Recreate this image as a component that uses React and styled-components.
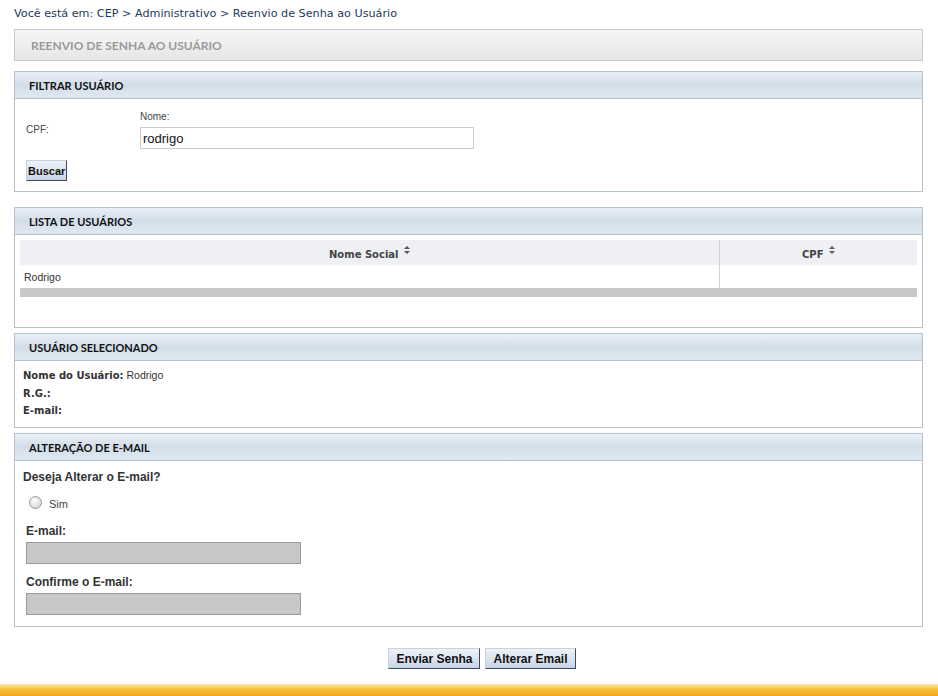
import styled, { createGlobalStyle } from 'styled-components';

const GlobalStyle = createGlobalStyle`
    html, body {
        margin: 0;
        padding: 0;
        background: #ffffff;
    }
    body {
        font-family: "Liberation Sans", Arial, sans-serif;
        color: #333;
    }
`;

const usuarios = [{ nome: 'Rodrigo', cpf: '' }];

function SortIcon() {
    return (
        <svg width="6" height="8" viewBox="0 0 6 8">
            <path d="M3 0 L6 3 L0 3 Z" fill="#555" />
            <path d="M0 5 L6 5 L3 8 Z" fill="#555" />
        </svg>
    );
}

export default function App() {
    return (
        <>
            <GlobalStyle />
            <Page>
                <Breadcrumb>Você está em: CEP &gt; Administrativo &gt; Reenvio de Senha ao Usuário</Breadcrumb>
                <TitleBar>REENVIO DE SENHA AO USUÁRIO</TitleBar>

                <Panel $gap="10px">
                    <PanelHeader>FILTRAR USUÁRIO</PanelHeader>
                    <FilterBody>
                        <FilterRow>
                            <CpfLabel>CPF:</CpfLabel>
                            <Field>
                                <SmallLabel>Nome:</SmallLabel>
                                <TextInput defaultValue="rodrigo" />
                            </Field>
                        </FilterRow>
                        <Button $small>Buscar</Button>
                    </FilterBody>
                </Panel>

                <Panel $gap="15px">
                    <PanelHeader>LISTA DE USUÁRIOS</PanelHeader>
                    <ListBody>
                        <Table>
                            <thead>
                                <tr>
                                    <Th>Nome Social <SortIcon /></Th>
                                    <Th $w="197px">CPF <SortIcon /></Th>
                                </tr>
                            </thead>
                            <tbody>
                                {usuarios.map((u, i) => (
                                    <tr key={i}>
                                        <Td>{u.nome}</Td>
                                        <Td $divider>{u.cpf}</Td>
                                    </tr>
                                ))}
                            </tbody>
                        </Table>
                        <Footer />
                    </ListBody>
                </Panel>

                <Panel $gap="5px">
                    <PanelHeader>USUÁRIO SELECIONADO</PanelHeader>
                    <InfoBody>
                        <InfoLine><b>Nome do Usuário:</b> <span>Rodrigo</span></InfoLine>
                        <InfoLine><b>R.G.:</b></InfoLine>
                        <InfoLine><b>E-mail:</b></InfoLine>
                    </InfoBody>
                </Panel>

                <Panel $gap="5px">
                    <PanelHeader>ALTERAÇÃO DE E-MAIL</PanelHeader>
                    <EmailBody>
                        <Question>Deseja Alterar o E-mail?</Question>
                        <RadioRow>
                            <Radio />
                            <RadioText>Sim</RadioText>
                        </RadioRow>
                        <FormLabel $top="14px">E-mail:</FormLabel>
                        <DisabledInput disabled />
                        <FormLabel $top="11px">Confirme o E-mail:</FormLabel>
                        <DisabledInput disabled />
                    </EmailBody>
                </Panel>

                <Actions>
                    <Button>Enviar Senha</Button>
                    <Button>Alterar Email</Button>
                </Actions>
            </Page>
            <OrangeBar />
        </>
    );
}

const Page = styled.div`
    padding: 7px 15px 0 14px;
    display: flex;
    flex-direction: column;
`;

const Breadcrumb = styled.div`
    font-family: "DejaVu Sans", Verdana, sans-serif;
    font-size: 11.2px;
    color: #1d3b5a;
    height: 15px;
    line-height: 13px;
`;

const TitleBar = styled.div`
    margin-top: 7px;
    height: 30px;
    border: 1px solid #c9c9c9;
    background: linear-gradient(#f6f6f6, #e6e6e6);
    font-family: Lato, "Open Sans", sans-serif;
    font-weight: 700;
    font-size: 12px;
    color: #9a9a9a;
    display: flex;
    align-items: center;
    padding-left: 16px;
`;

const Panel = styled.div`
    margin-top: ${p => p.$gap};
    border: 1px solid #b5c1cf;
    background: #fff;
`;

const PanelHeader = styled.div`
    height: 26px;
    border-bottom: 1px solid #b5c1cf;
    background: linear-gradient(#e9f0f7 0%, #d2dde8 50%, #e0e9f2 100%);
    font-family: Lato, "Open Sans", sans-serif;
    font-weight: 700;
    font-size: 11px;
    color: #111;
    display: flex;
    align-items: center;
    padding-left: 14px;
`;

const FilterBody = styled.div`
    padding: 12px 11px 10px;
    height: 70px;
`;

const FilterRow = styled.div`
    display: flex;
    align-items: flex-start;
`;

const CpfLabel = styled.div`
    width: 114px;
    padding-top: 13px;
    font-size: 10px;
    color: #444;
`;

const Field = styled.div`
    display: flex;
    flex-direction: column;
`;

const SmallLabel = styled.div`
    font-size: 10px;
    color: #444;
    height: 16px;
`;

const TextInput = styled.input`
    width: 328px;
    height: 18px;
    border: 1px solid #ccc;
    padding: 1px 2px;
    font-family: "Liberation Sans", Arial, sans-serif;
    font-size: 13px;
    color: #111;
    outline: none;
`;

const Button = styled.button`
    font-family: "Liberation Sans", Arial, sans-serif;
    font-weight: 700;
    font-size: ${p => (p.$small ? '11px' : '12px')};
    color: #111;
    height: 21px;
    padding: 0 ${p => (p.$small ? '1px' : '7px')};
    margin-top: ${p => (p.$small ? '11px' : '0')};
    background: linear-gradient(#eef2f8, #c9d5e5);
    border: 1px solid;
    border-color: #c8d2de #404a56 #404a56 #c8d2de;
    border-radius: 0;
    cursor: pointer;
`;

const ListBody = styled.div`
    padding: 5px 5px 0;
    height: 87px;
`;

const Table = styled.table`
    width: 100%;
    border-collapse: collapse;
    font-family: "DejaVu Sans", Verdana, sans-serif;
    font-size: 11px;
`;

const Th = styled.th`
    width: ${p => p.$w || 'auto'};
    height: 25px;
    background: #eef0f3;
    color: #444;
    font-weight: 700;
    font-size: 10px;
    text-align: center;
    padding: 0;
    border-left: ${p => (p.$w ? '1px solid #d0d4d8' : 'none')};
    svg {
        vertical-align: 4px;
        margin-left: 2px;
    }
`;

const Td = styled.td`
    height: 23px;
    padding: 0 4px;
    font-family: "Liberation Sans", Arial, sans-serif;
    font-size: 10.5px;
    color: #333;
    border-left: ${p => (p.$divider ? '1px solid #d0d4d8' : 'none')};
`;

const Footer = styled.div`
    height: 9px;
    background: #c8c8c8;
`;

const InfoBody = styled.div`
    padding: 8px 8px 7px;
    height: 51px;
`;

const InfoLine = styled.div`
    height: 17.5px;
    font-size: 10.5px;
    color: #333;
    b {
        font-family: "DejaVu Sans", Verdana, sans-serif;
        font-size: 10px;
        font-weight: 700;
        color: #333;
    }
`;

const EmailBody = styled.div`
    padding: 9px 11px 12px;
    height: 144px;
    box-sizing: content-box;
`;

const Question = styled.div`
    margin-left: -3px;
    font-weight: 700;
    font-size: 12px;
    color: #333;
`;

const RadioRow = styled.div`
    display: flex;
    align-items: center;
    margin-top: 10px;
    margin-left: 3px;
`;

const Radio = styled.span`
    width: 11px;
    height: 11px;
    border-radius: 50%;
    border: 1px solid #999;
    background: radial-gradient(circle at 40% 35%, #fff, #ccc);
`;

const RadioText = styled.span`
    margin-left: 7px;
    margin-top: 4px;
    font-size: 11px;
    color: #444;
`;

const FormLabel = styled.div`
    margin-top: ${p => p.$top};
    height: 18px;
    font-weight: 700;
    font-size: 12px;
    color: #333;
`;

const DisabledInput = styled.input`
    display: block;
    width: 275px;
    height: 22px;
    box-sizing: border-box;
    border: 1px solid #9a9a9a;
    background: #c8c8c8;
`;

const Actions = styled.div`
    display: flex;
    justify-content: center;
    gap: 5px;
    margin-top: 21px;
    margin-bottom: 15px;
    padding-left: 27px;
`;

const OrangeBar = styled.div`
    height: 12px;
    background: linear-gradient(#fde9a6, #f8bf3a 45%, #f2a91e);
`;
